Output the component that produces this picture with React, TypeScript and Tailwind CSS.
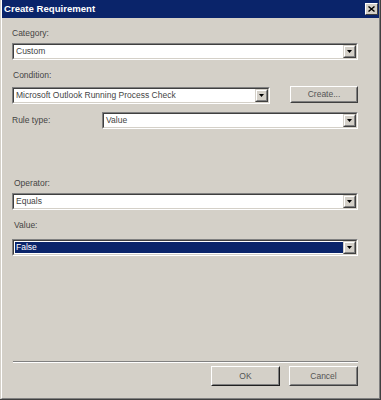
import React from "react";

const font = { fontFamily: '"Liberation Sans", Arial, sans-serif' };

function Arrow() {
  return (
    <svg width="5" height="3" viewBox="0 0 5 3">
      <polygon points="0,0 5,0 2.5,3" fill="#000" />
    </svg>
  );
}

function DropBtn() {
  return (
    <div className="w-[13px] h-full border border-t-[#d4d0c8] border-l-[#d4d0c8] border-r-[#404040] border-b-[#404040]">
      <div className="w-full h-full bg-[#d4d0c8] border border-t-white border-l-white border-r-[#808080] border-b-[#808080] flex items-center justify-center">
        <Arrow />
      </div>
    </div>
  );
}

function Combo({ className, text, selected }: { className: string; text: string; selected?: boolean }) {
  return (
    <div className={"h-[17px] border border-t-[#808080] border-l-[#808080] border-r-white border-b-white " + className}>
      <div className="h-full border border-t-[#404040] border-l-[#404040] border-r-[#d4d0c8] border-b-[#d4d0c8] bg-white flex">
        <div className="flex-1 flex items-stretch p-[1px] pr-0">
          <div
            className={
              "flex-1 flex items-center pl-[1px] text-[8.5px] leading-none " +
              (selected ? "bg-[#0a246a] text-white" : "text-[#444]")
            }
          >
            {text}
          </div>
        </div>
        <DropBtn />
      </div>
    </div>
  );
}

function Button({ className, label, isDefault }: { className: string; label: string; isDefault?: boolean }) {
  return (
    <div
      className={
        "border border-t-white border-l-white " +
        (isDefault ? "border-r-[#202020] border-b-[#202020] " : "border-r-[#404040] border-b-[#404040] ") +
        className
      }
    >
      <div className="h-full border border-t-[#d4d0c8] border-l-[#d4d0c8] border-r-[#808080] border-b-[#808080] flex items-center justify-center text-[8.5px] text-[#555] bg-[#d4d0c8]">
        {label}
      </div>
    </div>
  );
}

export default function App() {
  return (
    <div style={font} className="w-[381px] h-[400px] bg-[#d4d0c8] pl-[1px] border-r border-b border-r-[#404040] border-b-[#404040]">
      <div className="h-full flex flex-col border-l border-r border-b border-l-white border-r-[#808080] border-b-[#808080]">
        <div className="h-[18px] bg-[#0a246a] flex items-center justify-between pl-[2px] pr-[1px] shrink-0">
          <span className="text-white font-bold text-[9.6px] leading-none">Create Requirement</span>
          <div className="w-[13px] h-[12px] border border-t-white border-l-white border-r-[#404040] border-b-[#404040] bg-[#d4d0c8] flex items-center justify-center">
            <svg width="7" height="6" viewBox="0 0 7 6">
              <path d="M0.5 0.5L6.5 5.5M6.5 0.5L0.5 5.5" stroke="#000" strokeWidth="1.4" />
            </svg>
          </div>
        </div>

        <div className="ml-[10px] mt-[10px] h-[11px] flex items-center text-[8.5px] text-[#444] leading-none">Category:</div>
        <Combo className="ml-[10px] mt-[4px] w-[346px]" text="Custom" />

        <div className="ml-[11px] mt-[10px] h-[11px] flex items-center text-[8.5px] text-[#444] leading-none">Condition:</div>
        <div className="ml-[10px] mt-[5px] flex items-start">
          <Combo className="mt-[1px] w-[258px]" text="Microsoft Outlook Running Process Check" />
          <Button className="ml-[20px] w-[68px] h-[17px]" label="Create..." />
        </div>

        <div className="ml-[10px] mt-[8px] flex items-center">
          <div className="w-[90px] text-[8.5px] text-[#444] leading-none">Rule type:</div>
          <Combo className="w-[256px]" text="Value" />
        </div>

        <div className="ml-[12px] mt-[49px] h-[11px] flex items-center text-[8.5px] text-[#444] leading-none">Operator:</div>
        <Combo className="ml-[10px] mt-[4px] w-[346px]" text="Equals" />

        <div className="ml-[12px] mt-[10px] h-[11px] flex items-center text-[8.5px] text-[#444] leading-none">Value:</div>
        <Combo className="ml-[10px] mt-[8px] w-[346px]" text="False" selected />

        <div className="ml-[11px] mt-[105px] w-[345px] border-t border-b border-t-[#808080] border-b-white" />

        <div className="ml-[209px] mt-[3px] flex gap-[9px]">
          <Button className="w-[69px] h-[20px]" label="OK" isDefault />
          <Button className="w-[69px] h-[20px]" label="Cancel" />
        </div>
      </div>
    </div>
  );
}
